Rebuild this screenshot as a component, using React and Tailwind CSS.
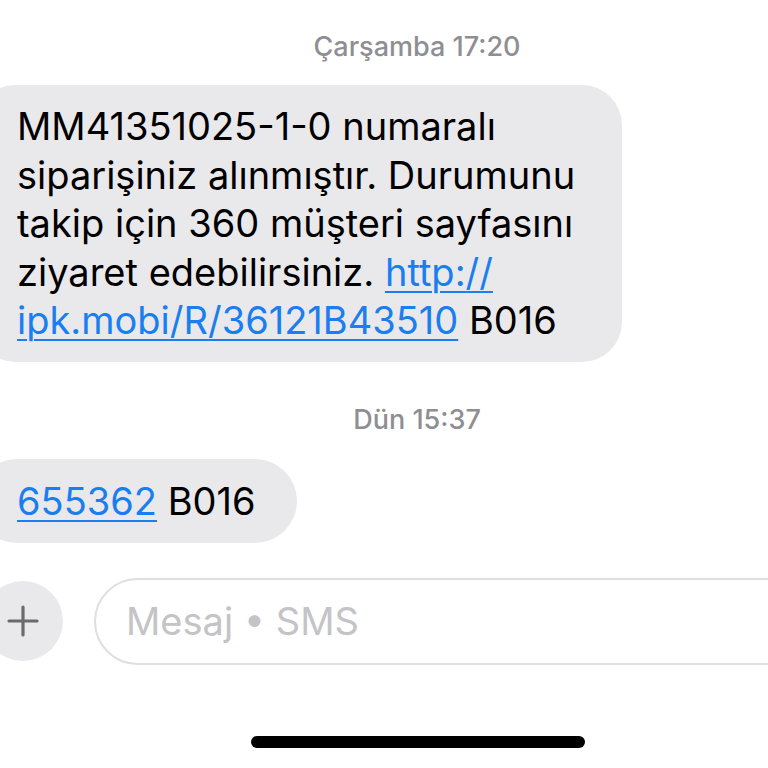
import React from "react";

const font = { fontFamily: "Inter, 'Noto Sans', sans-serif" };

const Stamp = ({ day, time, className }) => (
  <div className={`text-center text-[27px] leading-[28px] font-medium text-[#8e8e93] ${className}`}>
    {day} {time}
  </div>
);

const Link = ({ children }) => (
  <span className="text-[#1b7ef0] underline decoration-[2px] underline-offset-[5px]">{children}</span>
);

export default function App() {
  return (
    <div
      className="w-[768px] h-[768px] overflow-hidden bg-white flex flex-col"
      style={font}
    >
      <Stamp day="Çarşamba" time="17:20" className="mt-[33px] pl-[66px]" />

      <div className="mt-[24px] ml-[-25px] w-[647px] rounded-[40px] bg-[#e9e9eb] pl-[42px] py-[17px] text-[38px] leading-[48.5px] text-black">
        MM41351025-1-0 numaralı
        <br />
        siparişiniz alınmıştır. Durumunu
        <br />
        takip için 360 müşteri sayfasını
        <br />
        ziyaret edebilirsiniz. <Link>http://</Link>
        <br />
        <Link>ipk.mobi/R/36121B43510</Link> B016
      </div>

      <Stamp day="Dün" time="15:37" className="mt-[44px] pl-[66px]" />

      <div className="mt-[25px] ml-[-25px] w-[322px] rounded-[42px] bg-[#e9e9eb] pl-[42px] py-[18px] text-[38px] leading-[48px] text-black">
        <Link>655362</Link> B016
      </div>

      <div className="mt-[35px] h-[87px] flex items-center gap-[31px]">
        <div className="ml-[-17px] w-[80px] h-[80px] flex-none rounded-full bg-[#e9e9eb] flex items-center justify-center">
          <svg width="32" height="32" viewBox="0 0 32 32">
            <path d="M16 2v28M2 16h28" stroke="#6b6b6f" strokeWidth="3.2" strokeLinecap="round" />
          </svg>
        </div>
        <div className="flex-none w-[720px] h-[87px] rounded-full border-2 border-[#dfdfe2] flex items-center pl-[30px] text-[38px] text-[#c4c4c7]">
          Mesaj • SMS
        </div>
      </div>

      <div className="mt-[71px] ml-[251px] w-[334px] h-[12px] rounded-full bg-black" />
    </div>
  );
}
